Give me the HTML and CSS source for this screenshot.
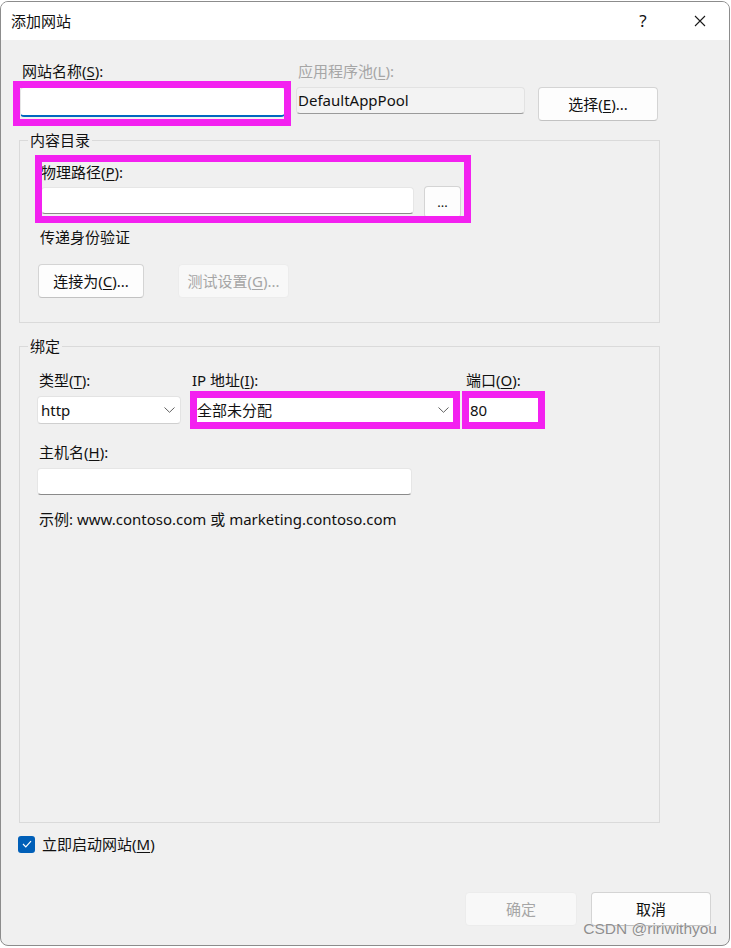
FILE: index.html
```html
<!DOCTYPE html>
<html lang="zh-CN">
<head>
<meta charset="utf-8">
<title>添加网站</title>
<link rel="stylesheet" href="styles.css">
</head>
<body>
<div class="window">
  <div class="titlebar">
    <span class="title">添加网站</span>
    <span class="help">?</span>
    <svg class="close" width="12" height="12" viewBox="0 0 12 12"><path d="M1 1 L11 11 M11 1 L1 11" stroke="#1a1a1a" stroke-width="1.1" fill="none"/></svg>
  </div>
  <div class="content">
    <div class="site-row">
      <div class="col col-name">
        <div class="label">网站名称(<u>S</u>):</div>
        <div class="textbox focused"></div>
      </div>
      <div class="col col-pool">
        <div class="label disabled">应用程序池(<u>L</u>):</div>
        <div class="readonly">DefaultAppPool</div>
      </div>
      <div class="col col-select">
        <div class="label">&nbsp;</div>
        <div class="btn btn-select">选择(<u>E</u>)...</div>
      </div>
    </div>

    <div class="group group-content">
      <div class="legend">内容目录</div>
      <div class="label path-label">物理路径(<u>P</u>):</div>
      <div class="path-row">
        <div class="textbox path-input"></div>
        <div class="btn btn-browse">...</div>
      </div>
      <div class="label auth-label">传递身份验证</div>
      <div class="auth-row">
        <div class="btn btn-connect">连接为(<u>C</u>)...</div>
        <div class="btn btn-test disabled-btn">测试设置(<u>G</u>)...</div>
      </div>
    </div>

    <div class="group group-binding">
      <div class="legend">绑定</div>
      <div class="bind-row">
        <div class="col col-type">
          <div class="label type-label">类型(<u>T</u>):</div>
          <div class="select"><span>http</span><svg class="chev" width="11" height="6" viewBox="0 0 11 6"><path d="M0.5 0.5 L5.5 5.3 L10.5 0.5" stroke="#606060" stroke-width="1" fill="none"/></svg></div>
        </div>
        <div class="col col-ip">
          <div class="label">IP 地址(<u>I</u>):</div>
          <div class="select ip-select"><span>全部未分配</span><svg class="chev" width="11" height="6" viewBox="0 0 11 6"><path d="M0.5 0.5 L5.5 5.3 L10.5 0.5" stroke="#606060" stroke-width="1" fill="none"/></svg></div>
        </div>
        <div class="col col-port">
          <div class="label">端口(<u>O</u>):</div>
          <div class="textbox port-input"><span>80</span></div>
        </div>
      </div>
      <div class="label host-label">主机名(<u>H</u>):</div>
      <div class="textbox host-input"></div>
      <div class="label example">示例: www.contoso.com 或 marketing.contoso.com</div>
    </div>

    <div class="check-row">
      <div class="checkbox"><svg width="10" height="8" viewBox="0 0 10 8"><path d="M1 4 L3.8 6.8 L9 1.2" stroke="#ffffff" stroke-width="1.2" fill="none"/></svg></div>
      <div class="label">立即启动网站(<u>M</u>)</div>
    </div>

    <div class="footer">
      <div class="btn btn-ok disabled-btn">确定</div>
      <div class="btn btn-cancel">取消</div>
    </div>
  </div>

  <div class="hl hl-name"></div>
  <div class="hl hl-path"></div>
  <div class="hl hl-ip"></div>
  <div class="hl hl-port"></div>
  <div class="watermark">CSDN @ririwithyou</div>
</div>
</body>
</html>
```

FILE: styles.css
```css
* { box-sizing: border-box; }
html, body { margin: 0; padding: 0; }
body {
  background: #ffffff;
  font-family: "Noto Sans", "Noto Sans CJK SC", sans-serif;
  font-size: 15px;
  color: #111111;
}
u { text-decoration: underline; text-underline-offset: 2px; text-decoration-thickness: 1px; }

.window {
  position: relative;
  margin-top: 1px;
  width: 730px;
  height: 945px;
  border: 1px solid #8c8c8c;
  border-radius: 8px;
  overflow: hidden;
  background: #f0f0f0;
}

.titlebar {
  height: 38px;
  background: #ffffff;
  display: flex;
  align-items: center;
  padding-left: 10px;
}
.title { line-height: 18px; flex: 1; }
.help { width: 14px; text-align: center; margin-right: 44px; line-height: 18px; font-size: 17px; }
.close { margin-right: 23px; }

.content { padding-top: 22px; }

.label { line-height: 18px; height: 18px; white-space: nowrap; }
.label.disabled { color: #a6a6a6; }

.site-row { display: flex; padding-left: 19px; }
.col { display: flex; flex-direction: column; }
.col .label { margin-bottom: 7px; }
.col-name { width: 265px; }
.col-name .label { padding-left: 2px; }
.col-pool { width: 229px; margin-left: 11px; }
.col-pool .label { padding-left: 2px; }
.col-select { width: 120px; margin-left: 13px; }

.textbox {
  background: #ffffff;
  border: 1px solid #e6e6e6;
  border-bottom-color: #8a8a8a;
  border-radius: 4px;
}
.textbox.focused {
  height: 30px;
  border-bottom: 2px solid #0067c0;
}
.readonly {
  height: 27px;
  background: #f3f3f3;
  border: 1px solid #e2e2e2;
  border-bottom-color: #9a9a9a;
  border-radius: 4px;
  padding-left: 1px;
  line-height: 25px;
}

.btn {
  height: 34px;
  background: #fdfdfd;
  border: 1px solid #d4d4d4;
  border-bottom-color: #c2c2c2;
  border-radius: 4px;
  display: flex;
  align-items: center;
  justify-content: center;
  line-height: 18px;
  white-space: nowrap;
}
.btn.disabled-btn {
  background: #f8f8f8;
  border-color: #ececec;
  color: #a6a6a6;
}
.btn-select { width: 120px; }

.group {
  margin-left: 18px;
  width: 641px;
  border: 1px solid #dadada;
}
.legend {
  display: table;
  margin: -10px 0 0 8px;
  padding: 0 2px;
  line-height: 18px;
  background: #f0f0f0;
}
.group-content { margin-top: 19px; padding-bottom: 24px; }
.path-label { margin-top: 14px; padding-left: 21px; }
.path-row { display: flex; align-items: flex-start; margin-top: 6px; padding-left: 21px; }
.path-input { width: 373px; height: 27px; }
.btn-browse { width: 37px; height: 32px; margin-left: 10px; margin-top: -1px; font-size: 13px; }
.auth-label { margin-top: 10px; padding-left: 20px; }
.auth-row { display: flex; margin-top: 18px; padding-left: 18px; }
.btn-connect { width: 106px; }
.btn-test { width: 111px; margin-left: 34px; }

.group-binding { margin-top: 23px; height: 477px; }
.bind-row { display: flex; margin-top: 16px; padding-left: 17px; }
.bind-row .col .label { margin-bottom: 7px; }
.col-type { width: 144px; }
.type-label { padding-left: 2px; }
.col-ip { width: 263px; margin-left: 11px; }
.col-port { width: 74px; margin-left: 11px; }

.select {
  height: 28px;
  background: #ffffff;
  border: 1px solid #e3e3e3;
  border-bottom-color: #cfcfcf;
  border-radius: 4px;
  display: flex;
  align-items: center;
  justify-content: space-between;
  padding: 0 5px 0 3px;
  line-height: 18px;
}
.ip-select { padding-left: 4px; }
.port-input { height: 28px; display: flex; align-items: center; padding-left: 3px; line-height: 18px; }

.host-label { margin-top: 19px; padding-left: 19px; }
.host-input { width: 375px; height: 27px; margin-top: 7px; margin-left: 17px; }
.example { margin-top: 15px; padding-left: 19px; }

.check-row { display: flex; align-items: center; margin-top: 12px; padding-left: 17px; }
.checkbox {
  width: 17px;
  height: 17px;
  background: #005fb8;
  border-radius: 3px;
  display: flex;
  align-items: center;
  justify-content: center;
  margin-right: 7px;
}

.footer { display: flex; justify-content: flex-end; margin-top: 39px; padding-right: 18px; }
.btn-ok { width: 112px; }
.btn-cancel { width: 120px; margin-left: 14px; }

.hl { position: absolute; border: 7px solid #f321f0; }
.hl-name { left: 12px; top: 79px; width: 278px; height: 45px; }
.hl-path { left: 34px; top: 153px; width: 436px; height: 68px; }
.hl-ip { left: 189px; top: 389px; width: 270px; height: 38px; }
.hl-port { left: 461px; top: 389px; width: 83px; height: 38px; }

.watermark {
  position: absolute;
  right: 12px;
  top: 918px;
  font-family: "Liberation Sans", Arial, sans-serif;
  font-size: 15.5px;
  line-height: 18px;
  color: #8f8f8f;
  text-shadow: 0 0 1px #ffffff;
}
```
